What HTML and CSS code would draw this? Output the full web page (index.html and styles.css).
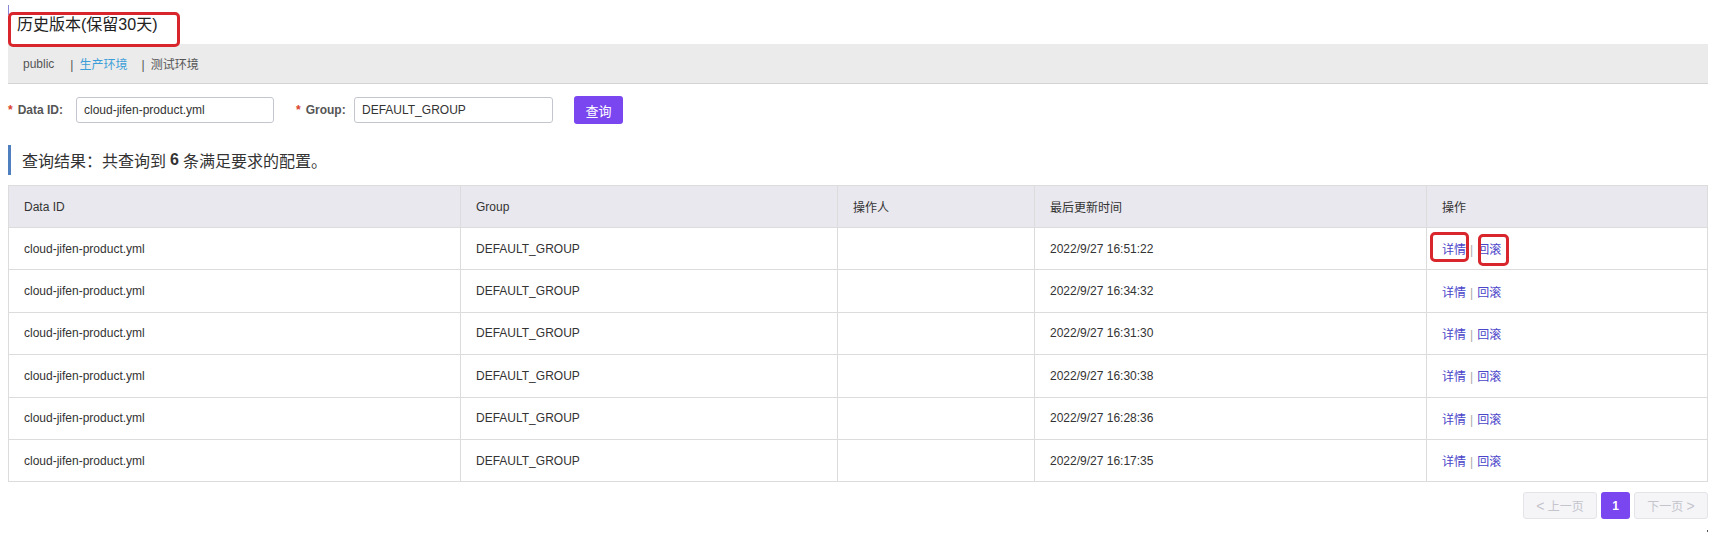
FILE: index.html
```html
<!DOCTYPE html>
<html lang="zh-CN">
<head>
<meta charset="utf-8">
<title>历史版本</title>
<link rel="stylesheet" href="styles.css">
</head>
<body>
<div class="page">
  <div class="title-wrap">
    <span class="edge-mark"></span>
    <h1 class="title">历史版本(保留30天)</h1>
    <span class="mark mark-title"></span>
  </div>

  <div class="tabs">
    <span class="tab">public</span>
    <span class="tab tab-active"><span class="sep">|</span>生产环境</span>
    <span class="tab"><span class="sep">|</span>测试环境</span>
  </div>

  <div class="query">
    <label class="field-label"><span class="req">*</span>Data ID:</label>
    <div class="input input-id">cloud-jifen-product.yml</div>
    <label class="field-label field-label-group"><span class="req">*</span>Group:</label>
    <div class="input input-group">DEFAULT_GROUP</div>
    <button class="btn-query">查询</button>
  </div>

  <div class="result-title">查询结果：共查询到 <b>6</b> 条满足要求的配置。</div>

  <table class="grid">
    <colgroup>
      <col class="c1"><col class="c2"><col class="c3"><col class="c4"><col class="c5">
    </colgroup>
    <thead>
      <tr><th>Data ID</th><th>Group</th><th>操作人</th><th>最后更新时间</th><th>操作</th></tr>
    </thead>
    <tbody>
      <tr><td>cloud-jifen-product.yml</td><td>DEFAULT_GROUP</td><td></td><td>2022/9/27 16:51:22</td>
        <td class="ops"><a class="op">详情</a><span class="op-sep">|</span><a class="op">回滚</a><span class="mark mark-detail"></span><span class="mark mark-rollback"></span></td></tr>
      <tr><td>cloud-jifen-product.yml</td><td>DEFAULT_GROUP</td><td></td><td>2022/9/27 16:34:32</td>
        <td class="ops"><a class="op">详情</a><span class="op-sep">|</span><a class="op">回滚</a></td></tr>
      <tr><td>cloud-jifen-product.yml</td><td>DEFAULT_GROUP</td><td></td><td>2022/9/27 16:31:30</td>
        <td class="ops"><a class="op">详情</a><span class="op-sep">|</span><a class="op">回滚</a></td></tr>
      <tr><td>cloud-jifen-product.yml</td><td>DEFAULT_GROUP</td><td></td><td>2022/9/27 16:30:38</td>
        <td class="ops"><a class="op">详情</a><span class="op-sep">|</span><a class="op">回滚</a></td></tr>
      <tr><td>cloud-jifen-product.yml</td><td>DEFAULT_GROUP</td><td></td><td>2022/9/27 16:28:36</td>
        <td class="ops"><a class="op">详情</a><span class="op-sep">|</span><a class="op">回滚</a></td></tr>
      <tr><td>cloud-jifen-product.yml</td><td>DEFAULT_GROUP</td><td></td><td>2022/9/27 16:17:35</td>
        <td class="ops"><a class="op">详情</a><span class="op-sep">|</span><a class="op">回滚</a></td></tr>
    </tbody>
  </table>

  <div class="pager">
    <button class="pg pg-nav" disabled><span class="arr">&lt;</span> 上一页</button>
    <button class="pg pg-current">1</button>
    <button class="pg pg-nav" disabled>下一页 <span class="arr">&gt;</span></button>
  </div>
  <div class="pager-dot-row"><span class="pager-dot"></span></div>
</div>
</body>
</html>
```

FILE: styles.css
```css
* { box-sizing: border-box; }

html, body {
  margin: 0;
  padding: 0;
  background: #fff;
}

body {
  font-family: "Liberation Sans", Arial, "Noto Sans CJK SC", sans-serif;
  color: #333;
  font-size: 12px;
}

.page {
  margin-left: 8px;
  width: 1700px;
}

/* title */
.title-wrap {
  position: relative;
  height: 44px;
  padding-left: 9px;
  padding-top: 15px;
}
.edge-mark {
  position: absolute;
  left: 0;
  top: 5px;
  width: 1px;
  height: 10px;
  background: #8a86d8;
}
.title {
  margin: 0;
  font-size: 16px;
  font-weight: normal;
  line-height: 20px;
  color: #222;
}

/* annotation boxes */
.mark {
  position: absolute;
  border: 3px solid #d8262c;
  border-radius: 5px;
  pointer-events: none;
}
.mark-title {
  left: 0;
  top: 12px;
  width: 172px;
  height: 35px;
}

/* tabs */
.tabs {
  height: 40px;
  background: #ebebeb;
  border-bottom: 1px solid #d4d4d4;
  display: flex;
  align-items: center;
  padding-left: 15px;
  font-size: 12px;
  color: #555;
}
.tab { margin-right: 14px; }
.tab:first-child { margin-right: 16px; }
.tab-active { color: #3c9ed8; }
.sep {
  color: #555;
  margin-right: 6px;
}

/* query form */
.query {
  margin-top: 13px;
  height: 26px;
  display: flex;
  align-items: center;
}
.field-label {
  font-weight: bold;
  font-size: 12px;
  color: #555;
  width: 68px;
}
.field-label-group {
  margin-left: 22px;
  width: 58px;
}
.req {
  color: #d9432d;
  margin-right: 5px;
}
.input {
  height: 26px;
  border: 1px solid #c4c6cf;
  border-radius: 3px;
  background: #fff;
  padding-left: 7px;
  display: flex;
  align-items: center;
  font-size: 12px;
  color: #333;
}
.input-id { width: 198px; }
.input-group { width: 199px; }
.btn-query {
  margin-left: 21px;
  width: 49px;
  height: 28px;
  border: none;
  border-radius: 3px;
  background: #7a46f0;
  color: #fff;
  font-family: "Noto Sans CJK SC", sans-serif;
  font-size: 13px;
  padding: 0;
}

/* result heading */
.result-title {
  margin-top: 22px;
  height: 30px;
  border-left: 3px solid #4f7fbe;
  padding-left: 11px;
  display: flex;
  align-items: center;
  font-size: 16px;
  color: #333;
  font-family: "Noto Sans CJK SC", "Liberation Sans", sans-serif;
}
.result-title b {
  font-family: "Liberation Sans", Arial, sans-serif;
  margin: 0 4px;
}

/* table */
.grid {
  margin-top: 10px;
  width: 1699px;
  border-collapse: collapse;
  table-layout: fixed;
  font-size: 12px;
}
.c1 { width: 452px; }
.c2 { width: 377px; }
.c3 { width: 197px; }
.c4 { width: 392px; }
.c5 { width: 281px; }

.grid th,
.grid td {
  border: 1px solid #dcdcdc;
  padding: 0 0 0 15px;
  text-align: left;
  font-weight: normal;
  color: #333;
}
.grid th {
  height: 42px;
  background: #e9e8ee;
}
.grid td {
  height: 42.4px;
}
.ops { position: relative; }
.op {
  color: #4a45c9;
  cursor: pointer;
}
.op-sep {
  color: #aaa;
  margin: 0 4px;
}
.mark-detail {
  left: 3px;
  top: 4px;
  width: 39px;
  height: 30px;
}
.mark-rollback {
  left: 51px;
  top: 6px;
  width: 31px;
  height: 32px;
}

/* pagination */
.pager {
  margin-top: 10px;
  display: flex;
  justify-content: flex-end;
  gap: 4px;
}
.pg {
  height: 27px;
  border-radius: 3px;
  font-size: 12px;
  padding: 0;
  font-family: "Liberation Sans", "Noto Sans CJK SC", sans-serif;
}
.pg-nav {
  width: 74px;
  background: #f5f5f8;
  border: 1px solid #e3e3ea;
  color: #c4c4cc;
}
.arr { font-size: 14px; }
.pg-current {
  width: 29px;
  background: #7a46f0;
  border: none;
  color: #fff;
  font-weight: bold;
}
.pager-dot-row {
  display: flex;
  justify-content: flex-end;
  margin-top: 11px;
}
.pager-dot {
  width: 1px;
  height: 2px;
  background: #555;
}
```
